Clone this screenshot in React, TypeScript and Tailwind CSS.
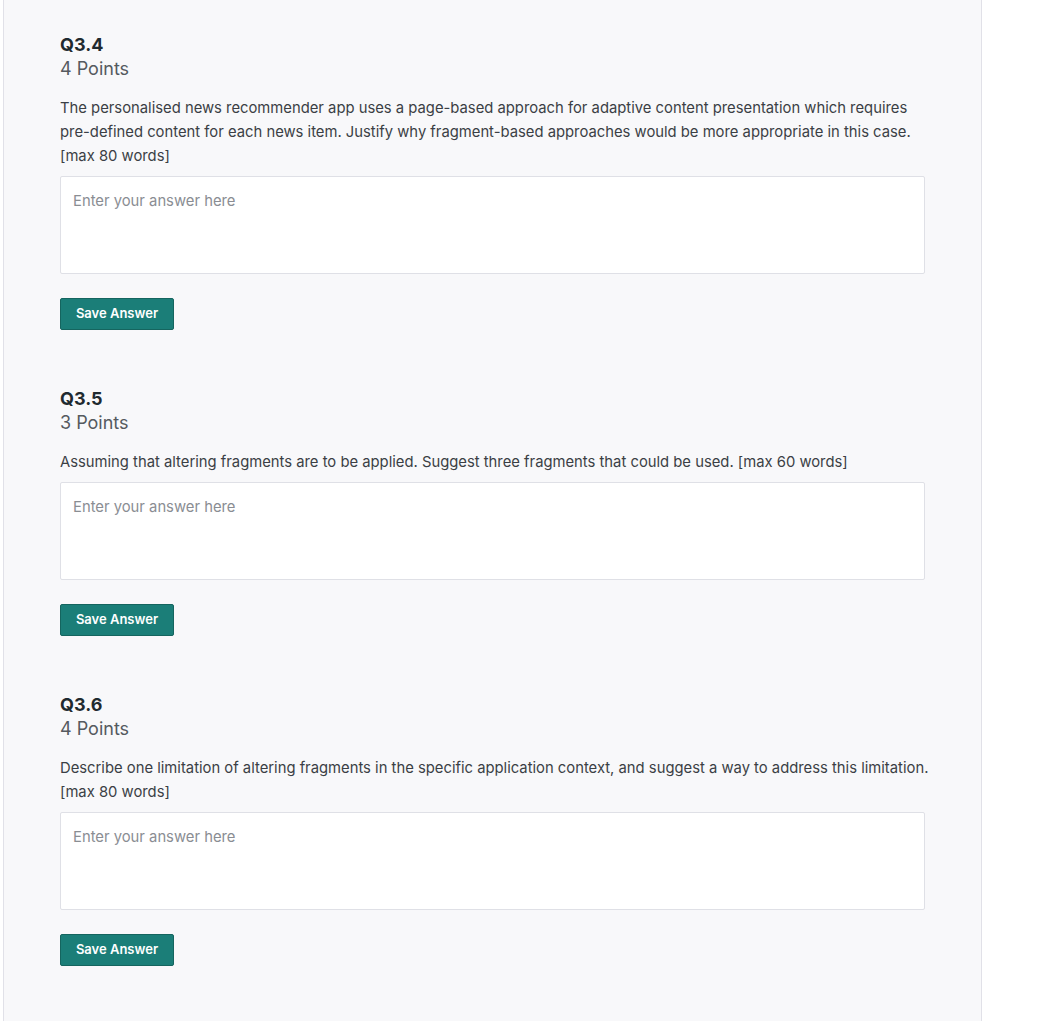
import React from "react";

type Q = { id: string; points: string; lines: string[] };

const questions: Q[] = [
  {
    id: "Q3.4",
    points: "4 Points",
    lines: [
      "The personalised news recommender app uses a page-based approach for adaptive content presentation which requires",
      "pre-defined content for each news item. Justify why fragment-based approaches would be more appropriate in this case.",
      "[max 80 words]",
    ],
  },
  {
    id: "Q3.5",
    points: "3 Points",
    lines: [
      "Assuming that altering fragments are to be applied. Suggest three fragments that could be used. [max 60 words]",
    ],
  },
  {
    id: "Q3.6",
    points: "4 Points",
    lines: [
      "Describe one limitation of altering fragments in the specific application context, and suggest a way to address this limitation.",
      "[max 80 words]",
    ],
  },
];

function Question({ q }: { q: Q }) {
  return (
    <section className="mb-[57px]">
      <h2 className="text-[18px] leading-[24px] font-bold text-[#1f2a30]">{q.id}</h2>
      <div className="text-[18px] leading-[24px] text-[#555a5f]">{q.points}</div>
      <div className="mt-[15px] text-[14.8px] leading-[24px] text-[#3b3f45] whitespace-nowrap">
        {q.lines.map((l, i) => (
          <div key={i}>{l}</div>
        ))}
      </div>
      <div className="mt-[8px] w-[865px] h-[98px] bg-white border border-[#dfe0e6] rounded-[2px] px-[12px] pt-[11px]">
        <span className="text-[14.8px] leading-[24px] text-[#8a8d93]">Enter your answer here</span>
      </div>
      <button className="mt-[24px] w-[114px] h-[32px] bg-[#1b7e78] border border-[#15655f] rounded-[2px] text-white text-[13px] font-semibold flex items-center justify-center">
        Save Answer
      </button>
    </section>
  );
}

export default function App() {
  return (
    <div className="w-[1064px] h-[1021px] bg-white overflow-hidden" style={{ fontFamily: "Inter, 'Open Sans', sans-serif" }}>
      <div className="ml-[3px] w-[979px] h-full bg-[#f8f8fa] border-l border-r border-[#e1e1e8] pl-[56px] pt-[33px]">
        {questions.map((q) => (
          <Question key={q.id} q={q} />
        ))}
      </div>
    </div>
  );
}
